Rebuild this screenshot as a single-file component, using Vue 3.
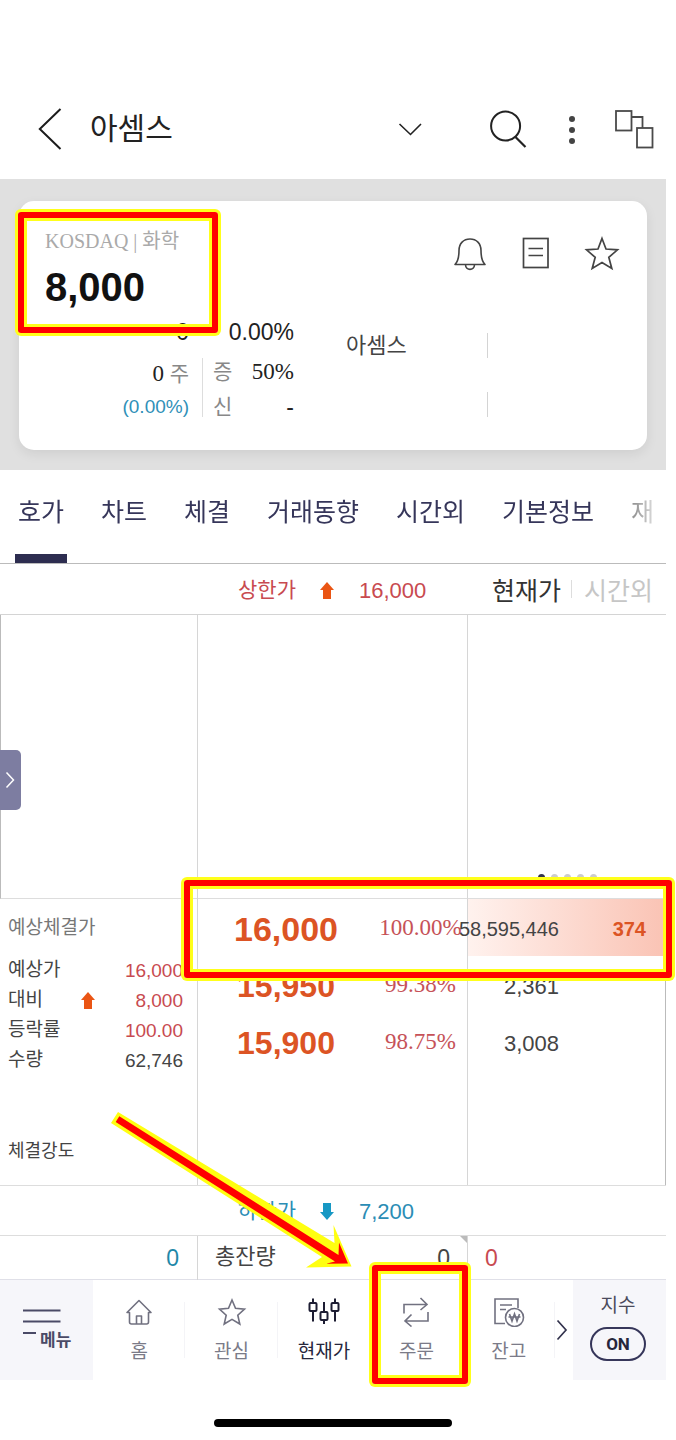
<script setup>
const tabs = ['호가', '차트', '체결', '거래동향', '시간외', '기본정보', '재']

const expected = [
  { label: '예상가', value: '16,000', tone: 'up' },
  { label: '대비', value: '8,000', tone: 'up', arrow: true },
  { label: '등락률', value: '100.00', tone: 'up' },
  { label: '수량', value: '62,746', tone: 'plain' },
]

const ladder = [
  { price: '16,000', rate: '100.00%', qty: '58,595,446', change: '374', best: true },
  { price: '15,950', rate: '99.38%', qty: '2,361', change: '' },
  { price: '15,900', rate: '98.75%', qty: '3,008', change: '' },
]
</script>

<template>
  <div class="page">
    <header class="top">
      <button class="icon-btn" aria-label="뒤로">
        <svg width="24" height="42" viewBox="0 0 24 42"><path d="M22.500 1 L1.800 21 L22.500 41" fill="none" stroke="#1c1c1c" stroke-width="2" /></svg>
      </button>
      <button class="stock-name">
        <span>아셈스</span>
        <svg width="24" height="14" viewBox="0 0 24 14"><path d="M1.500 2 L12.500 12.500 L23 2" fill="none" stroke="#222" stroke-width="1.600" /></svg>
      </button>
      <button class="icon-btn search" aria-label="검색">
        <svg width="38" height="42" viewBox="0 0 38 42"><circle cx="16.600" cy="18" r="14.500" fill="none" stroke="#222" stroke-width="2" /><path d="M26.500 29 L36.500 39" stroke="#222" stroke-width="2.200" /></svg>
      </button>
      <button class="icon-btn more" aria-label="더보기">
        <svg width="20" height="42" viewBox="0 0 20 42"><g fill="#444"><circle cx="10" cy="11" r="3" /><circle cx="10" cy="22" r="3" /><circle cx="10" cy="33" r="3" /></g></svg>
      </button>
      <button class="icon-btn windows" aria-label="화면 연결">
        <svg width="40" height="42" viewBox="0 0 40 42"><g fill="none" stroke="#4a4a4a" stroke-width="1.800"><rect x="2" y="3" width="15.500" height="19.500" /><rect x="23" y="20" width="15.500" height="19.500" /><path d="M17.500 9 H28.500 V20" /></g></svg>
      </button>
    </header>

    <section class="hero">
      <div class="card">
        <div class="card-top">
          <div>
            <p class="market">KOSDAQ | 화학</p>
            <p class="price">8,000</p>
          </div>
          <div class="card-actions">
            <button class="icon-btn" aria-label="알림">
              <svg width="36" height="36" viewBox="0 0 36 36"><g fill="none" stroke="#444" stroke-width="1.600" stroke-linejoin="round"><path d="M3 29.500 C6.500 26 7 22 7 15.500 C7 8.500 11.500 4 18 4 S29 8.500 29 15.500 C29 22 29.500 26 33 29.500 Z" /><path d="M13.500 29.500 C13.500 36 22.500 36 22.500 29.500" /></g></svg>
            </button>
            <button class="icon-btn" aria-label="메모">
              <svg width="28" height="36" viewBox="0 0 28 36"><g fill="none" stroke="#444" stroke-width="1.700"><rect x="1.500" y="3.500" width="24.500" height="29" /><path d="M6.500 13.500 H21 M6.500 20.500 H21" /></g></svg>
            </button>
            <button class="icon-btn" aria-label="관심 등록">
              <svg width="36" height="36" viewBox="0 0 36 36"><path d="M18 3.500 L22 14 L33.500 14.800 L24.800 22.300 L27.800 33.500 L18 27.500 L8.200 33.500 L11.200 22.300 L2.500 14.800 L14 14 Z" fill="none" stroke="#444" stroke-width="1.700" /></svg>
            </button>
          </div>
        </div>
        <div class="card-body">
          <div class="stats">
            <span class="right big">0</span>
            <span class="right big wide">0.00%</span>
            <span class="right serif">0 <i>주</i></span>
            <span class="rule"></span>
            <span class="pair serif"><i>증</i><b>50%</b></span>
            <span class="right blue">(0.00%)</span>
            <span class="pair"><i>신</i><b>-</b></span>
          </div>
          <div class="related">
            <span>아셈스</span>
            <span></span>
          </div>
        </div>
        <div class="mark mark-price"></div>
      </div>
    </section>

    <nav class="tabs">
      <div class="tab-strip">
        <button v-for="(t, i) in tabs" :key="t" :class="{ active: i === 0, faded: i === tabs.length - 1 }">{{ t }}</button>
      </div>
    </nav>

    <div class="limit upper">
      <div></div>
      <div class="limit-mid up">
        <span>상한가</span>
        <svg width="14" height="18" viewBox="0 0 14 18"><path d="M7 0 L14 8 H11 V17 H3 V8 H0 Z" fill="#ea5514" /></svg>
        <strong>16,000</strong>
      </div>
      <div class="mode">
        <button class="on">현재가</button>
        <span class="bar"></span>
        <button>시간외</button>
      </div>
    </div>

    <main class="board">
      <aside class="side">
        <div class="side-blank"></div>
        <h2>예상체결가</h2>
        <dl>
          <div v-for="e in expected" :key="e.label">
            <dt>{{ e.label }}</dt>
            <dd :class="e.tone">
              <svg v-if="e.arrow" class="rise" width="14" height="18" viewBox="0 0 14 18"><path d="M7 0 L14 8 H11 V17 H3 V8 H0 Z" fill="#ea5514" /></svg>
              {{ e.value }}
            </dd>
          </div>
        </dl>
        <p class="strength">체결강도</p>
      </aside>

      <table class="ladder">
        <colgroup><col class="c-price" /><col class="c-rate" /><col class="c-qty" /><col class="c-change" /></colgroup>
        <tbody>
          <tr class="blank-top">
            <td colspan="2"></td>
            <td colspan="2" class="pager-cell"><div class="pager"><i v-for="n in 5" :key="n" :class="{ cur: n === 1 }"></i></div></td>
          </tr>
          <tr v-for="r in ladder" :key="r.price" class="quote" :class="{ best: r.best }">
            <td class="q-price">{{ r.price }}</td>
            <td class="q-rate">{{ r.rate }}</td>
            <td class="q-qty"><span>{{ r.qty }}</span></td>
            <td class="q-change">{{ r.change }}</td>
          </tr>
          <tr class="blank-bottom"><td colspan="2"></td><td colspan="2"></td></tr>
        </tbody>
      </table>

      <button class="drawer" aria-label="펼치기">
        <svg width="10" height="18" viewBox="0 0 10 18"><path d="M1.500 1.500 L8.500 9 L1.500 16.500" fill="none" stroke="#fff" stroke-width="1.500" /></svg>
      </button>
      <div class="mark mark-quote"></div>
      <svg class="pointer" width="250" height="166" viewBox="0 0 250 166">
        <path d="M18 2 L11 13 L222 147 L206 157.500 L251.500 156.500 L233.500 115 L234.500 133 Z" fill="#ffff10" />
        <path d="M19.300 6.300 L15.700 12 L235 151.500 L226 153.800 L248 153.500 L239 132.500 L238.500 145 Z" fill="#f00" />
      </svg>
    </main>

    <div class="limit lower">
      <div></div>
      <div class="limit-mid down">
        <span>하한가</span>
        <svg width="14" height="18" viewBox="0 0 14 18"><path d="M3 0 H11 V9 H14 L7 17 L0 9 H3 Z" fill="#1798c4" /></svg>
        <strong>7,200</strong>
      </div>
      <div></div>
    </div>

    <div class="totals">
      <div class="t-left">0</div>
      <div class="t-mid"><span>총잔량</span><span>0</span></div>
      <div class="t-right">0</div>
    </div>

    <nav class="dock">
      <button class="menu">
        <svg width="38" height="26" viewBox="0 0 38 26"><path d="M0 1.500 H37.500 M0 12.500 H37.500 M0 24 H13" stroke="#4a4a66" stroke-width="2" /></svg>
        <span>메뉴</span>
      </button>
      <div class="items">
        <a href="#home">
          <svg width="30" height="30" viewBox="0 0 30 30"><g fill="none" stroke="#717180" stroke-width="1.600" stroke-linejoin="round"><path d="M5.500 15.500 H3 L15 3.500 L27 15.500 H24.500 V25 Q24.500 27 22.500 27 H7.500 Q5.500 27 5.500 25 Z" /><path d="M12.500 27 V19 H17.500 V27" /></g></svg>
          <span>홈</span>
        </a>
        <a href="#watch">
          <svg width="30" height="30" viewBox="0 0 30 30"><path d="M15 3 L18.500 11.300 L27.500 12.200 L20.800 18.200 L22.800 27 L15 22.400 L7.200 27 L9.200 18.200 L2.500 12.200 L11.500 11.300 Z" fill="none" stroke="#717180" stroke-width="1.600" /></svg>
          <span>관심</span>
        </a>
        <a href="#quote" class="current">
          <svg width="34" height="30" viewBox="0 0 34 30"><g fill="none" stroke="#1d1d33" stroke-width="2"><rect x="2.500" y="6" width="7" height="8" rx="1" /><path d="M6 1.500 V6 M6 14 V24.500" /><rect x="13.500" y="15" width="7" height="8" rx="1" /><path d="M17 5 V15 M17 23 V27" /><rect x="24.500" y="6" width="7" height="8" rx="1" /><path d="M28 1.500 V6 M28 14 V24.500" /></g></svg>
          <span>현재가</span>
        </a>
        <a href="#order">
          <svg width="30" height="30" viewBox="0 0 30 30"><g fill="none" stroke="#717180" stroke-width="1.600"><path d="M3 16.500 V7.500 H25.500 M19.500 1 L26 7.500 L19.500 13" /><path d="M27 15 V24 H4 M10.500 17.500 L4 24 L10.500 29.500" /></g></svg>
          <span>주문</span>
          <div class="mark mark-order"></div>
        </a>
        <a href="#balance">
          <svg width="32" height="30" viewBox="0 0 32 30"><g fill="none" stroke="#717180" stroke-width="1.600"><path d="M12 26.500 H2 V2 H25 V11" /><path d="M7 8 H19 M7 12.500 H13" /><circle cx="21.500" cy="20.500" r="9" /><path d="M16.500 17 L19 24 L21.500 17 L24 24 L26.500 17 M15.500 20 H27.500" /></g></svg>
          <span>잔고</span>
        </a>
      </div>
      <button class="next" aria-label="다음">
        <svg width="12" height="22" viewBox="0 0 12 22"><path d="M1.500 1.500 L10 11 L1.500 20.500" fill="none" stroke="#33334d" stroke-width="1.700" /></svg>
      </button>
      <div class="index">
        <span id="index-label">지수</span>
        <button aria-labelledby="index-label">ON</button>
      </div>
    </nav>

    <div class="home-bar"></div>
  </div>
</template>

<style>
body { background: #fff; }
</style>

<style scoped>
.page {
  position: relative;
  padding-right: 10px;
  overflow: hidden;
  background: #fff;
  color: #222;
  font-family: 'Liberation Sans', 'Noto Sans CJK KR', sans-serif;
}
.page * { box-sizing: border-box; }
button { margin: 0; padding: 0; border: 0; background: none; font: inherit; color: inherit; }
p, h2, dl, dd { margin: 0; }
i { font-style: normal; }
svg { display: block; flex: none; }
.icon-btn { flex: none; }

.top { display: flex; align-items: center; height: 179px; padding: 78px 12px 0 38px; }
.stock-name {
  flex: 1; display: flex; align-items: center; justify-content: space-between;
  margin-left: 28px; font-size: 30px; line-height: 40px;
}
.search { margin-left: 67px; }
.more { margin-left: 35px; }
.windows { margin-left: 32px; }

.hero { padding: 22px 19px 20px; background: #e0e0e0; }
.card {
  position: relative; padding: 28px 26px 31px; background: #fff;
  border-radius: 15px; box-shadow: 0 4px 12px rgba(0, 0, 0, 0.08);
}
.card-top { display: flex; justify-content: space-between; }
.market { font: 20px/24px 'Liberation Serif', 'Noto Sans CJK KR', serif; color: #aaa; }
.price { margin-top: 12px; font-size: 40px; line-height: 44px; font-weight: 700; color: #111; }
.card-actions { display: flex; gap: 34px; height: 36px; margin: 6px 1px 0 0; }
.card-body { display: flex; gap: 52px; margin-top: 6px; }
.stats {
  display: grid; grid-template-columns: 144px 24px 81px;
  grid-template-rows: 34px 46px 24px; align-items: center;
}
.right { text-align: right; }
.big { font-size: 23px; }
.wide { grid-column: 2 / 4; }
.serif { font-family: 'Liberation Serif', 'Noto Sans CJK KR', serif; font-size: 23px; }
.stats i { font-size: 21px; color: #888; }
.stats b { font-weight: 400; font-size: 23px; }
.pair { display: flex; align-items: center; justify-content: space-between; line-height: 24px; grid-column: 3; }
.rule { grid-row: 2 / 4; grid-column: 2; width: 1px; height: 59px; margin: 9px 0 2px 13px; background: #ddd; }
.blue { grid-column: 1; font-size: 19px; color: #2f90b8; }
.related { display: flex; flex-direction: column; gap: 34px; padding-top: 18px; }
.related span {
  width: 142px; height: 25px; border-right: 1px solid #d4d4d4;
  font-size: 22px; line-height: 25px; color: #444;
}

.mark {
  position: absolute; z-index: 3; border: 6px solid #f00; border-radius: 3px; pointer-events: none;
  box-shadow: 0 0 0 3px #ffff1a, inset 0 0 0 3px #ffff1a;
}
.mark-price { left: -1px; top: 11px; width: 200px; height: 121px; }
.mark-quote { left: 184px; right: -6px; top: 265px; height: 98px; }
.mark-order { left: 50%; top: -15px; width: 96px; height: 119px; margin-left: -44px; }

.tabs { padding: 0 6px 0 15px; border-bottom: 1px solid #bbb; }
.tab-strip {
  display: flex; gap: 31px; overflow: hidden;
  mask-image: linear-gradient(to right, #000 calc(100% - 24px), rgba(0, 0, 0, 0.1));
}
.tabs button {
  flex: none; height: 93px; padding: 0 3px; border-bottom: 9px solid transparent;
  font-size: 25px; line-height: 36px; color: #36365a; white-space: nowrap;
}
.tabs .active { border-bottom-color: #2d2d50; }
.tabs .faded { color: #999; }

.limit, .totals { display: grid; grid-template-columns: 198px 1fr 198px; }
.limit { height: 49px; font-size: 22px; }
.limit.upper { height: 51px; border-bottom: 1px solid #d4d4d4; }
.limit-mid { display: flex; align-items: center; padding-left: 40px; padding-top: 3px; }
.limit-mid span { font-size: 21px; line-height: 26px; padding-bottom: 2px; }
.limit-mid svg { margin: 0 25px 0 24px; }
.limit-mid strong { font-weight: 400; }
.up { color: #c84a50; }
.down { color: #2b8db5; }
.plain { color: #444; }
.mode { display: flex; align-items: center; padding-left: 24px; font-size: 25px; white-space: nowrap; color: #c6c6c6; }
.mode .on { color: #333; }
.bar { width: 1px; height: 18px; margin: 0 12px 0 10px; background: #ddd; }

.board { position: relative; display: grid; grid-template-columns: 198px 1fr; border-bottom: 1px solid #ddd; }
.side { border-right: 1px solid #d6d6d6; }
.side-blank { height: 284px; border-left: 1px solid #bbb; border-bottom: 1px solid #ddd; }
.side h2 { margin: 15px 8px 13px; font-size: 19px; line-height: 28px; font-weight: 400; color: #777; }
.side dl { padding: 0 14px 0 8px; font-size: 19px; }
.side dl div { display: flex; justify-content: space-between; line-height: 30px; }
.side dt { color: #444; }
.side dd { display: flex; align-items: center; padding-top: 2px; line-height: 28px; }
.rise { margin-right: 40px; }
.strength { margin: 62px 8px 0; font-size: 18px; line-height: 28px; color: #444; }

.ladder { width: 100%; table-layout: fixed; border-collapse: separate; border-spacing: 0; }
.ladder td { padding: 0; }
.c-price { width: 176px; }
.c-qty { width: 99px; }
.c-change { width: 99px; }
.blank-top { height: 284px; }
.blank-top td:first-child { border-right: 1px solid #d6d6d6; border-bottom: 1px solid #ddd; }
.pager-cell { vertical-align: bottom; border-bottom: 1px solid #ddd; }
.pager { display: flex; justify-content: center; gap: 6px; padding-bottom: 17px; }
.pager i { width: 7px; height: 7px; border-radius: 50%; background: #ccc; }
.pager .cur { background: #33334d; }
.quote { height: 57px; }
.ladder .quote td { padding-top: 4px; }
.ladder .quote .q-rate { padding-top: 1px; }
.best { background: linear-gradient(to right, transparent calc(100% - 198px), #fff2ee calc(100% - 198px), #fac3b4); }
.q-price { text-align: center; font-size: 32px; font-weight: 700; color: #dc5424; }
.best .q-price { font-size: 34px; }
.q-rate { text-align: center; font: 23px/26px 'Liberation Serif', serif; color: #c65258; border-right: 1px solid #d6d6d6; }
.q-qty { font-size: 22px; color: #444; }
.ladder .q-qty { padding-right: 8px; }
.q-qty span { display: flex; justify-content: flex-end; white-space: nowrap; }
.best .q-qty { font-size: 20px; }
.ladder .quote .q-qty { padding-right: 8px; }
.ladder .quote .q-change { padding-right: 20px; text-align: right; font-size: 20px; font-weight: 700; color: #dc5424; }
.quote:not(.best) .q-change { border-right: 1px solid #bbb; }
.blank-bottom { height: 115px; }
.blank-bottom td:first-child { border-right: 1px solid #d6d6d6; }
.blank-bottom td:last-child { border-right: 1px solid #bbb; }

.drawer {
  position: absolute; left: 0; top: 135px; width: 21px; height: 60px;
  display: flex; align-items: center; padding-left: 5px;
  background: #7d7da1; border-radius: 0 5px 5px 0;
}
.pointer { position: absolute; z-index: 4; left: 100px; top: 495px; overflow: visible; }

.totals { height: 44px; border-top: 1px solid #ddd; font-size: 23px; line-height: 44px; }
.t-left { padding-right: 18px; text-align: right; color: #1f88a8; border-right: 1px solid #d6d6d6; }
.t-mid {
  position: relative; display: flex; justify-content: space-between; padding: 0 17px 0 17px;
  border-right: 1px solid #d6d6d6; color: #444;
}
.t-mid span:first-child { font-size: 22px; line-height: 42px; }
.t-mid::after {
  content: ''; position: absolute; right: 0; top: 0;
  border-top: 7px solid #bbb; border-left: 7px solid transparent;
}
.t-right { padding-left: 17px; color: #c84a50; }

.dock { display: flex; height: 101px; border-top: 1px solid #e0e0e8; font-size: 19px; color: #7b7b88; }
.dock .menu {
  flex: none; display: flex; flex-direction: column; align-items: flex-start; justify-content: flex-start;
  width: 93px; padding: 29px 0 0 23px; background: #f6f6fa;
}
.menu span { margin: -6px 0 0 17px; font-size: 17px; line-height: 24px; font-weight: 700; color: #4a4a66; }
.items { flex: 1; display: grid; grid-template-columns: repeat(5, 1fr); }
.items a {
  position: relative; display: flex; flex-direction: column; align-items: center;
  padding-top: 17px; color: inherit; text-decoration: none;
}
.items a::after { content: ''; position: absolute; right: 0; top: 22px; width: 1px; height: 56px; background: #f4f4f7; }
.items a span { margin-top: 11px; line-height: 28px; }
.items .current { color: #26263c; }
.dock .next { flex: none; width: 18px; padding: 0 0 0 1px; }
.index { flex: none; width: 93px; padding: 12px 3px 0 0; background: #f6f6fa; text-align: center; color: #4a4a5c; }
.index span { display: block; line-height: 28px; }
.index button {
  display: block; width: 56px; height: 34px; margin: 7px auto 0; border: 2px solid #36365a; border-radius: 17px;
  font: 700 17px/30px Roboto, sans-serif; color: #26263c;
}
.home-bar { width: 238px; height: 8px; margin: 39px auto 13px; border-radius: 4px; background: #000; }
</style>
